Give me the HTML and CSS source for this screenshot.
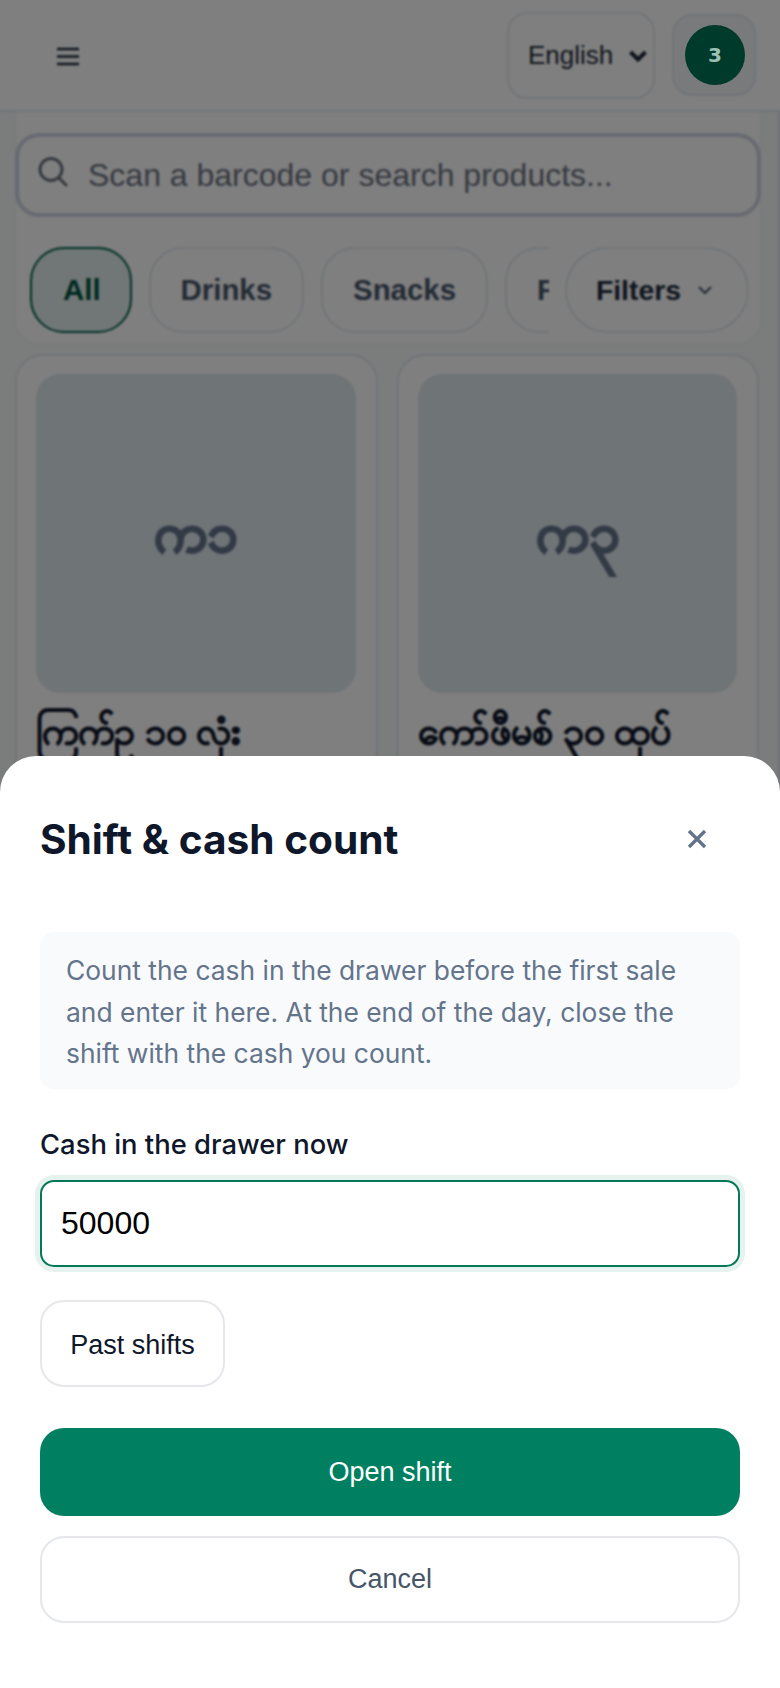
FILE: index.html
```html
<!DOCTYPE html>
<html lang="en">
<head>
  <meta charset="UTF-8">
  <meta name="viewport" content="width=device-width, initial-scale=1.0">
  <title>Shift &amp; cash count</title>
  <link rel="stylesheet" href="styles.css">
</head>
<body>
  <header class="topbar">
    <button class="menu-btn" aria-label="Menu">
      <svg width="22" height="20" viewBox="0 0 22 20"><path d="M0 2h22M0 9.5h22M0 17h22" stroke="#1f2937" stroke-width="2.6" fill="none"/></svg>
    </button>
    <div class="topbar-right">
      <div class="lang-select">
        <span>English</span>
        <svg width="18" height="12" viewBox="0 0 18 12"><path d="M1.5 2 9 9.5 16.5 2" stroke="#1f2937" stroke-width="4" fill="none"/></svg>
      </div>
      <div class="avatar-btn"><span class="avatar">3</span></div>
    </div>
  </header>

  <main class="content">
    <section class="toolbar">
      <div class="search">
        <svg width="32" height="32" viewBox="0 0 32 32"><circle cx="14" cy="13.5" r="11" stroke="#6b7280" stroke-width="3" fill="none"/><path d="m22 22 8 8" stroke="#6b7280" stroke-width="3" fill="none"/></svg>
        <input class="search-input" type="text" placeholder="Scan a barcode or search products...">
      </div>
      <div class="chip-row">
        <div class="chips">
          <span class="chip chip-active">All</span>
          <span class="chip">Drinks</span>
          <span class="chip">Snacks</span>
          <span class="chip">Food</span>
        </div>
        <button class="filters-btn">Filters
          <svg width="16" height="10" viewBox="0 0 16 10"><path d="m2 2 6 6 6-6" stroke="#475569" stroke-width="2" fill="none"/></svg>
        </button>
      </div>
    </section>

    <section class="product-grid">
      <article class="product">
        <div class="product-thumb">က၁</div>
        <h3 class="product-name">ကြက်ဥ ၁၀ လုံး</h3>
      </article>
      <article class="product">
        <div class="product-thumb">က၃</div>
        <h3 class="product-name">ကော်ဖီမစ် ၃၀ ထုပ်</h3>
      </article>
    </section>
  </main>

  <div class="overlay"></div>

  <div class="sheet">
    <div class="sheet-head">
      <h2>Shift &amp; cash count</h2>
      <button class="close-btn" aria-label="Close">
        <svg width="20" height="20" viewBox="0 0 20 20"><path d="m2 2 16 16M18 2 2 18" stroke="#64748b" stroke-width="3.4" fill="none"/></svg>
      </button>
    </div>
    <p class="note">Count the cash in the drawer before the first sale and enter it here. At the end of the day, close the shift with the cash you count.</p>
    <label class="field-label" for="cash">Cash in the drawer now</label>
    <input class="cash-input" id="cash" type="text" value="50000">
    <button class="btn btn-small">Past shifts</button>
    <button class="btn btn-primary">Open shift</button>
    <button class="btn btn-cancel">Cancel</button>
  </div>
</body>
</html>
```

FILE: styles.css
```css
/* General */
* {
  box-sizing: border-box;
}

html, body {
  height: 1688px;
}

body {
  margin: 0;
  overflow: hidden;
  position: relative;
  font-family: "Liberation Sans", Arial, sans-serif;
  background: #f6f8f9;
  color: #0f172a;
}

button {
  font-family: inherit;
  background: none;
  border: none;
  padding: 0;
}

/* Top bar */
.topbar {
  height: 112px;
  padding: 12px 24px 0 57px;
  display: flex;
  justify-content: space-between;
  align-items: flex-start;
  background: #fff;
  border-bottom: 2px solid #e2e8f0;
}

.menu-btn {
  margin-top: 35px;
  height: 20px;
  display: flex;
}

.topbar-right {
  display: flex;
  gap: 17px;
}

.lang-select {
  width: 148px;
  height: 87px;
  padding: 0 6px 0 19px;
  display: flex;
  align-items: center;
  justify-content: space-between;
  font-size: 26px;
  color: #1f2937;
  border: 2px solid #e2e8f0;
  border-radius: 20px;
}

.avatar-btn {
  width: 84px;
  height: 82px;
  margin-top: 2px;
  padding-left: 2px;
  display: flex;
  align-items: center;
  justify-content: center;
  background: #f1f5f9;
  border: 2px solid #e2e8f0;
  border-radius: 20px;
}

/* sits above the dim layer so it keeps its own colours */
.avatar {
  position: relative;
  z-index: 1;
  width: 60px;
  height: 60px;
  border-radius: 50%;
  display: flex;
  align-items: center;
  justify-content: center;
  font-family: "DejaVu Sans", sans-serif;
  font-weight: 700;
  font-size: 20px;
  color: #9cc0b3;
  background: #003a2b;
}

/* Search and chips */
.content {
  padding: 0 22px 0 15px;
  border-right: 2px solid #e2e8f0;
}

.toolbar {
  margin-right: -5px;
  padding: 25px 3px 11px 3px;
  height: 232px;
  background: #fff;
  border-radius: 0 0 24px 24px;
  border: 1px solid #eef1f4;
  border-top: none;
}

.search {
  height: 76px;
  padding: 0 18px;
  display: flex;
  align-items: center;
  gap: 19px;
  background: #fff;
  border-radius: 20px;
  box-shadow: 0 0 0 4px #d0d4e4;
}

.search svg {
  margin-top: -6px;
  flex-shrink: 0;
}

.search-input {
  flex: 1;
  border: none;
  outline: none;
  background: none;
  padding: 0;
  font-family: inherit;
  font-size: 32px;
}

.search-input::placeholder {
  color: #6b7280;
  opacity: 1;
}

.chip-row {
  margin-top: 34px;
  display: flex;
  padding-left: 11px;
}

.chips {
  width: 519px;
  display: flex;
  gap: 17px;
  overflow: hidden;
}

.chip {
  height: 86px;
  padding: 0 30px;
  flex-shrink: 0;
  display: flex;
  align-items: center;
  font-size: 29.4px;
  font-weight: 700;
  color: #475569;
  border: 2px solid #e2e8f0;
  border-radius: 34px;
}

.chip-active {
  padding: 0 29px 0 31px;
  color: #00533e;
  background: #e2efec;
  border-color: #00604a;
}

.filters-btn {
  width: 184px;
  height: 86px;
  margin-left: 16px;
  padding-right: 5px;
  display: flex;
  align-items: center;
  justify-content: center;
  gap: 16px;
  font-size: 28.4px;
  font-weight: 700;
  color: #1e293b;
  background: #fff;
  border: 2px solid #e2e8f0;
  border-radius: 43px;
}

/* Product cards */
.product-grid {
  margin-top: 10px;
  display: grid;
  grid-template-columns: 363px 362px;
  gap: 19px;
}

.product {
  height: 500px;
  padding: 18px 20px 18px 19px;
  background: #fff;
  border: 2px solid #e2e8f0;
  border-radius: 28px;
}

.product-thumb {
  height: 319px;
  padding-top: 8px;
  display: flex;
  align-items: center;
  justify-content: center;
  font-size: 54px;
  font-weight: 700;
  -webkit-text-stroke: 2.2px #64748b;
  color: #64748b;
  background: #dee8ee;
  border-radius: 24px;
}

.product-name {
  margin: 11px 0 0;
  font-size: 37.5px;
  font-weight: 700;
  -webkit-text-stroke: 0.8px #0f172a;
  font-family: "Noto Sans", sans-serif;
}

/* Dim layer and sheet */
.overlay {
  position: absolute;
  inset: 0;
  background: rgba(0, 0, 0, 0.5);
  backdrop-filter: blur(0.8px);
}

.sheet {
  position: absolute;
  left: 0;
  right: 0;
  bottom: 0;
  height: 932px;
  padding: 0 40px;
  display: flex;
  flex-direction: column;
  background: #fff;
  border-radius: 36px 36px 0 0;
}

.sheet-head {
  height: 176px;
  display: flex;
  align-items: flex-start;
  justify-content: space-between;
}

.sheet-head h2 {
  margin: 60px 0 0;
  font-family: Inter, sans-serif;
  font-size: 40.6px;
  line-height: 48px;
  font-weight: 700;
  color: #0f172a;
}

.close-btn {
  margin: 73px 33px 0 0;
  height: 20px;
  display: flex;
}

.note {
  margin: 0;
  padding: 18px 26px;
  height: 157px;
  font-family: Inter, sans-serif;
  font-size: 26.4px;
  line-height: 41.5px;
  color: #64748b;
  background: #f8fafc;
  border-radius: 14px;
}

.field-label {
  margin-top: 39px;
  font-family: Inter, sans-serif;
  font-size: 27.4px;
  line-height: 32px;
  font-weight: 500;
  color: #0f172a;
}

.cash-input {
  margin-top: 20px;
  height: 87px;
  padding: 0 19px;
  flex-shrink: 0;
  font-family: inherit;
  font-size: 32px;
  color: #000;
  outline: none;
  border: 2px solid #047857;
  border-radius: 14px;
  box-shadow: 0 0 0 5px #e6f2ee;
}

.btn {
  height: 87px;
  flex-shrink: 0;
  font-size: 27px;
  border-radius: 24px;
}

.btn-small {
  width: 185px;
  margin-top: 33px;
  padding-top: 3px;
  color: #0f172a;
  border: 2px solid #e5e7eb;
}

.btn-primary {
  margin-top: 41px;
  height: 88px;
  padding-top: 1px;
  color: #fff;
  background: #008060;
}

.btn-cancel {
  margin-top: 20px;
  color: #475569;
  border: 2px solid #e5e7eb;
}
```
